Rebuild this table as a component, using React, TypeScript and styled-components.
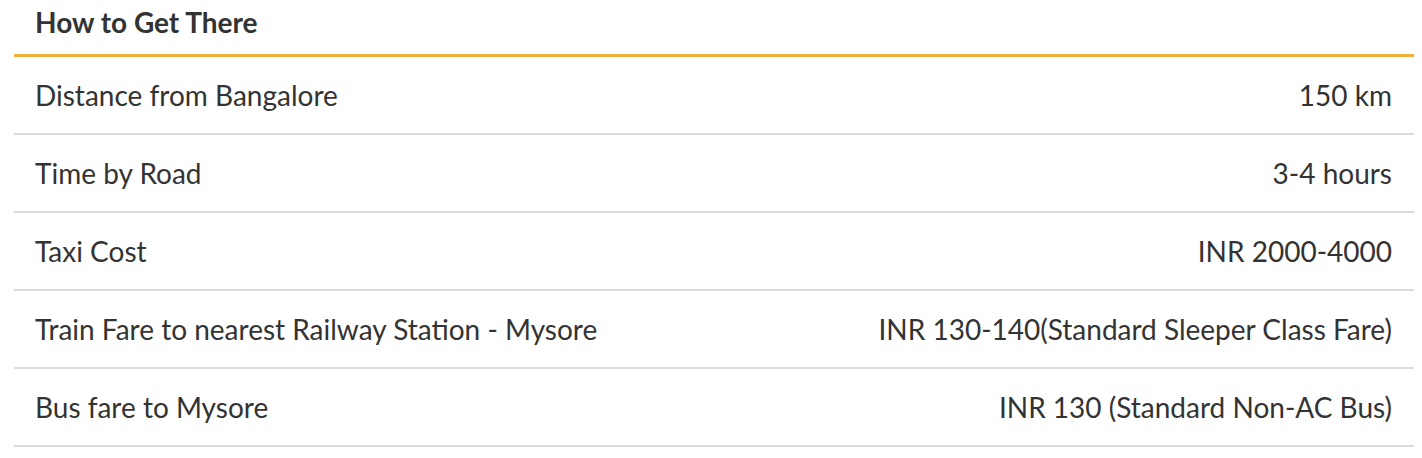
import React from 'react';
import styled, { createGlobalStyle } from 'styled-components';

const GlobalStyle = createGlobalStyle`
  body {
    margin: 0;
    background: #ffffff;
    font-family: Lato, 'Open Sans', sans-serif;
  }
`;

interface FareRow {
  label: string;
  value: string;
}

const rows: FareRow[] = [
  { label: 'Distance from Bangalore', value: '150 km' },
  { label: 'Time by Road', value: '3-4 hours' },
  { label: 'Taxi Cost', value: 'INR 2000-4000' },
  { label: 'Train Fare to nearest Railway Station - Mysore', value: 'INR 130-140(Standard Sleeper Class Fare)' },
  { label: 'Bus fare to Mysore', value: 'INR 130 (Standard Non-AC Bus)' }
];

const App = () => {
  return (
    <S.Page>
      <GlobalStyle />
      <S.Section>
        <S.Title>How to Get There</S.Title>
        <S.Table>
          {rows.map((row) => (
            <S.Row key={row.label}>
              <S.Label>{row.label}</S.Label>
              <S.Value>{row.value}</S.Value>
            </S.Row>
          ))}
        </S.Table>
      </S.Section>
    </S.Page>
  );
};

export default App;

const S = {
  Page: styled.div`
    padding: 0 8px 0 14px;
  `,
  Section: styled.section`
    width: 1400px;
  `,
  Title: styled.h3`
    margin: 0;
    height: 57px;
    padding: 0 21px 10px;
    box-sizing: border-box;
    display: flex;
    align-items: center;
    font-size: 28px;
    font-weight: 700;
    color: #333333;
    border-bottom: 3px solid #f0b23b;
  `,
  Table: styled.div`
    display: flex;
    flex-direction: column;
  `,
  Row: styled.div`
    display: flex;
    justify-content: space-between;
    align-items: center;
    height: 78px;
    box-sizing: border-box;
    padding: 0 22px 0 21px;
    border-bottom: 2px solid #d8dcdf;
    font-size: 28px;
    color: #333333;
  `,
  Label: styled.span``,
  Value: styled.span`
    text-align: right;
  `
};
